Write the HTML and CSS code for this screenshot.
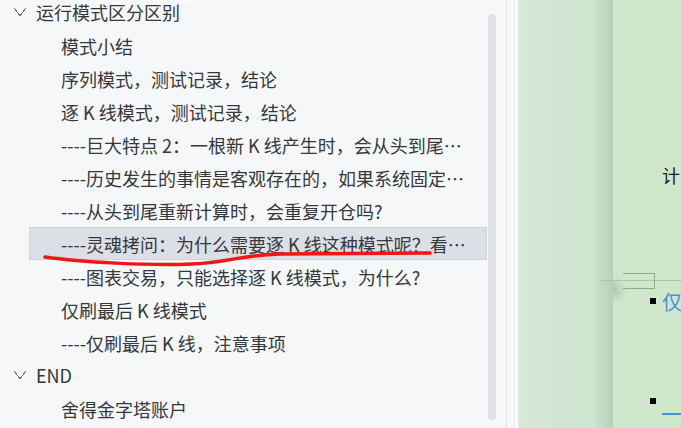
FILE: index.html
```html
<!DOCTYPE html>
<html lang="zh-CN">
<head>
    <meta charset="UTF-8">
    <meta name="viewport" content="width=device-width, initial-scale=1.0">
    <title>大纲</title>
    <link rel="stylesheet" href="styles.css">
</head>
<body>
    <div class="sidebar">
        <div class="outline">
            <div class="row head"><span class="chev"></span>运行模式区分区别</div>
            <div class="row item">模式小结</div>
            <div class="row item">序列模式，测试记录，结论</div>
            <div class="row item">逐 K 线模式，测试记录，结论</div>
            <div class="row item">----巨大特点 2：一根新 K 线产生时，会从头到尾重新计算一遍</div>
            <div class="row item">----历史发生的事情是客观存在的，如果系统固定不变</div>
            <div class="row item">----从头到尾重新计算时，会重复开仓吗?</div>
            <div class="row item active">----灵魂拷问：为什么需要逐 K 线这种模式呢？看完就懂了</div>
            <div class="row item">----图表交易，只能选择逐 K 线模式，为什么?</div>
            <div class="row item">仅刷最后 K 线模式</div>
            <div class="row item">----仅刷最后 K 线，注意事项</div>
            <div class="row head"><span class="chev"></span>END</div>
            <div class="row item">舍得金字塔账户</div>
        </div>
        <div class="gutter"><div class="thumb"></div></div>

        <!-- hand drawn annotation -->
        <svg class="mark" width="506" height="428" viewBox="0 0 506 428">
            <path d="M45 257 C 80 262, 150 266, 192 264 S 238 255, 280 254 L 430 253" fill="none" stroke="#f01616" stroke-width="3.5" stroke-linecap="round"/>
        </svg>
    </div>
    <div class="strip"></div>
    <div class="panel"></div>
    <div class="page">
        <div class="calc">计</div>
        <div class="rule"><span class="bracket"></span></div>
        <div class="bullet first"><span class="dot"></span><span class="link">仅刷最后</span></div>
        <div class="bullet second"><span class="dot"></span><span class="underline"></span></div>
    </div>
</body>
</html>
```

FILE: styles.css
```css
body {
    margin: 0;
    padding: 0;
    height: 428px;
    overflow: hidden;
    display: flex;
    font-family: "Noto Sans CJK SC", "Noto Sans", sans-serif;
    color: #34373b;
}

.sidebar {
    position: relative;
    width: 506px;
    flex: none;
    display: flex;
    background: #f6f7f9;
    border-right: 1px solid #e3e5e8;
}

.outline {
    width: 488px;
    margin-top: -4px;
}

.row {
    height: 33px;
    line-height: 33px;
    font-size: 18px;
    white-space: nowrap;
    overflow: hidden;
    text-overflow: ellipsis;
    box-sizing: border-box;
}

.head {
    display: flex;
    align-items: center;
    padding-left: 14px;
}

.chev {
    width: 12px;
    height: 8px;
    margin-right: 10px;
    margin-top: -2px;
    background:
        linear-gradient(to top right, transparent 46%, #6b6e73 47%, #6b6e73 56%, transparent 57%) left / 50% 100% no-repeat,
        linear-gradient(to top left, transparent 46%, #6b6e73 47%, #6b6e73 56%, transparent 57%) right / 50% 100% no-repeat;
}

.item {
    margin-left: 29px;
    width: 458px;
    padding-left: 31px;
    padding-right: 16px;
    border: 1px solid transparent;
}

.active {
    background: #dcdfe5;
    border-color: #cfd2d8;
}

.gutter {
    width: 18px;
}

.thumb {
    width: 8px;
    height: 406px;
    margin-top: 14px;
    border-radius: 4px;
    background: #dfe1e4;
}

.mark {
    position: absolute;
    top: 0;
    left: 0;
}

.strip {
    width: 7px;
    flex: none;
    background: #f7f8fa;
    border-right: 1px solid #e6e8eb;
}

.panel {
    width: 95px;
    flex: none;
    border-left: 3px solid #fafbfc;
    background: linear-gradient(to right, #d7e8dc 0%, #d0e6d3 40%, #cfe6d0 78%, #c3dbc4 88%, #b6d0b7 100%);
}

.page {
    flex: 1;
    background: #cfe8cc;
    background-image: radial-gradient(circle at 0 290px, rgba(150, 180, 150, 0.6) 0, rgba(150, 180, 150, 0) 14px);
}

.calc {
    margin-top: 162px;
    padding-left: 49px;
    font-size: 18px;
    line-height: 26px;
    color: #1e2226;
}

.rule {
    position: relative;
    margin-top: 92px;
    margin-left: -12px;
    height: 1px;
    background: #a9c4a7;
}

.bracket {
    position: absolute;
    left: 22px;
    top: -7px;
    width: 31px;
    height: 14px;
    border: 1px solid #8fa98d;
    border-left: none;
}

.bullet {
    display: flex;
    align-items: center;
    padding-left: 37px;
    height: 24px;
}

.first {
    margin-top: 8px;
}

.second {
    margin-top: 76px;
}

.dot {
    width: 6px;
    height: 6px;
    background: #000;
    margin-right: 7px;
    flex: none;
}

.link {
    font-size: 20px;
    color: #4a8fdc;
    white-space: nowrap;
    margin-left: -1px;
}

.underline {
    align-self: flex-start;
    width: 40px;
    height: 2px;
    background: #4a8fdc;
    margin-top: 24px;
    margin-left: -1px;
}
```
